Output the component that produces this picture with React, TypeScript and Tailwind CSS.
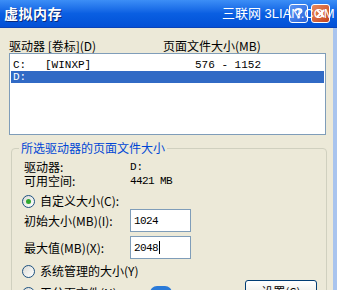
import React from 'react';

const cjk = "font-['Noto_Sans_CJK_SC',sans-serif]";
const mono = "font-['Liberation_Mono','Noto_Sans_CJK_SC',monospace]";

function Radio({ checked, label }: { checked?: boolean; label: string }) {
  return (
    <div className="flex items-center h-[14px]">
      <span className="w-[13px] h-[13px] rounded-full border border-[#1c5180] bg-gradient-to-br from-[#dcdcd6] to-white flex items-center justify-center ml-[-2px]">
        {checked && <span className="w-[5px] h-[5px] rounded-full bg-[#2fa82f]" />}
      </span>
      <span className="ml-[5px] text-[12px] leading-[14px] text-black">{label}</span>
    </div>
  );
}

function Field({ label, value, caret }: { label: string; value: string; caret?: boolean }) {
  return (
    <div className="flex items-center h-[23px]">
      <span className="w-[106px] text-[12px] leading-[14px]">{label}</span>
      <div className="w-[61px] h-[23px] border border-[#7f9db9] bg-white flex items-center pl-[3px]">
        <span className={`${mono} text-[11px] leading-[14px] tracking-[-0.6px]`}>{value}</span>
        {caret && <span className="w-px h-[13px] bg-black ml-[1px]" />}
      </div>
    </div>
  );
}

export default function App() {
  return (
    <div className={`${cjk} w-[337px] h-[290px] overflow-hidden bg-[#ece9d8] relative flex flex-col`}>
      {/* title bar */}
      <div className="h-[28px] shrink-0 relative bg-gradient-to-b from-[#3c8ef6] via-[#0a5fe2] to-[#0350d6] flex items-center px-[4px] border-b border-[#0a43b8]">
        <span className="text-white font-bold text-[14px] tracking-[0.5px] [text-shadow:1px_1px_0_#0a2a7a]">虚拟内存</span>
        <div className="ml-auto flex gap-[3px] items-center mr-[3px]">
          <div className="w-[19px] h-[19px] rounded-[3px] border border-white bg-gradient-to-br from-[#5b95f4] to-[#2a63da] flex items-center justify-center">
            <svg width="9" height="11" viewBox="0 0 9 11" fill="none" stroke="white" strokeWidth="2">
              <path d="M1.5 3.2C1.5 1.8 2.7 1 4.5 1S7.5 1.9 7.5 3.2c0 1.6-3 1.8-3 3.8" />
              <path d="M4.5 8.5v2" />
            </svg>
          </div>
          <div className="w-[19px] h-[19px] rounded-[3px] border border-white bg-gradient-to-br from-[#e8895c] to-[#c3421c] flex items-center justify-center">
            <svg width="9" height="9" viewBox="0 0 9 9" stroke="white" strokeWidth="2">
              <path d="M1 1l7 7M8 1l-7 7" />
            </svg>
          </div>
        </div>
        <span className="absolute left-[222px] top-[5px] whitespace-nowrap text-white text-[13px] leading-[18px] font-['Liberation_Sans','Noto_Sans_CJK_SC',sans-serif]">三联网 3LIAN.COM</span>
      </div>

      <div className="flex flex-1 min-h-0">
        <div className="flex-1 pl-[9px] pr-[7px] pt-[11px]">
          {/* header */}
          <div className="flex h-[14px] text-[12px] leading-[14px] text-black">
            <span className="w-[154px]">驱动器 [卷标](D)</span>
            <span>页面文件大小(MB)</span>
          </div>

          {/* list */}
          <div className="h-[82px] border border-[#7f9db9] bg-white pt-[5px] px-[1px]">
            <div className={`${mono} flex h-[12px] items-center text-[11px] leading-[12px] pl-[2px]`}>
              <span className="w-[32px]">C:</span>
              <span className="w-[150px]">[WINXP]</span>
              <span>576 - 1152</span>
            </div>
            <div className={`${mono} flex h-[12px] items-center bg-[#316ac5] text-white text-[11px] leading-[12px] pl-[2px]`}>
              <span>D:</span>
            </div>
          </div>

          {/* group box */}
          <div className="relative mt-[13px] ml-[2px] mr-[-1px] h-[200px] border border-[#d0d0bf] rounded-[4px] pl-[12px] pr-[9px] pt-[11px]">
            <span className="absolute left-[7px] top-[-8px] bg-[#ece9d8] px-[2px] text-[12px] leading-[14px] text-[#0046d5]">所选驱动器的页面文件大小</span>
            <div className="flex h-[14px] text-[12px] leading-[14px]">
              <span className="w-[106px]">驱动器:</span>
              <span className={`${mono} text-[11px]`}>D:</span>
            </div>
            <div className="flex h-[14px] text-[12px] leading-[14px]">
              <span className="w-[106px]">可用空间:</span>
              <span className={`${mono} text-[11px] tracking-[-0.6px]`}>4421 MB</span>
            </div>
            <div className="mt-[6px]">
              <Radio checked label="自定义大小(C):" />
            </div>
            <div className="mt-[1px]">
              <Field label="初始大小(MB)(I):" value="1024" />
            </div>
            <div className="mt-[4px]">
              <Field label="最大值(MB)(X):" value="2048" caret />
            </div>
            <div className="mt-[5px]">
              <Radio label="系统管理的大小(Y)" />
            </div>
            <div className="flex items-start mt-[2px]">
              <div className="mt-[6px]">
                <Radio label="无分页文件(N)" />
              </div>
              <div className="ml-auto w-[72px] h-[23px] rounded-[3px] border border-[#003c74] bg-gradient-to-b from-white to-[#e3e2d9] flex items-center justify-center text-[12px] leading-[14px] shadow-[inset_0_-1px_0_#d6d0c5]">
                设置(S)
              </div>
            </div>
            <span className="absolute left-[138px] top-[137px] w-[22px] h-[14px] rounded-full bg-[#2a7ad8]" />
          </div>
        </div>
        <div className="w-[4px] bg-[#a9c4ee]" />
      </div>
    </div>
  );
}
